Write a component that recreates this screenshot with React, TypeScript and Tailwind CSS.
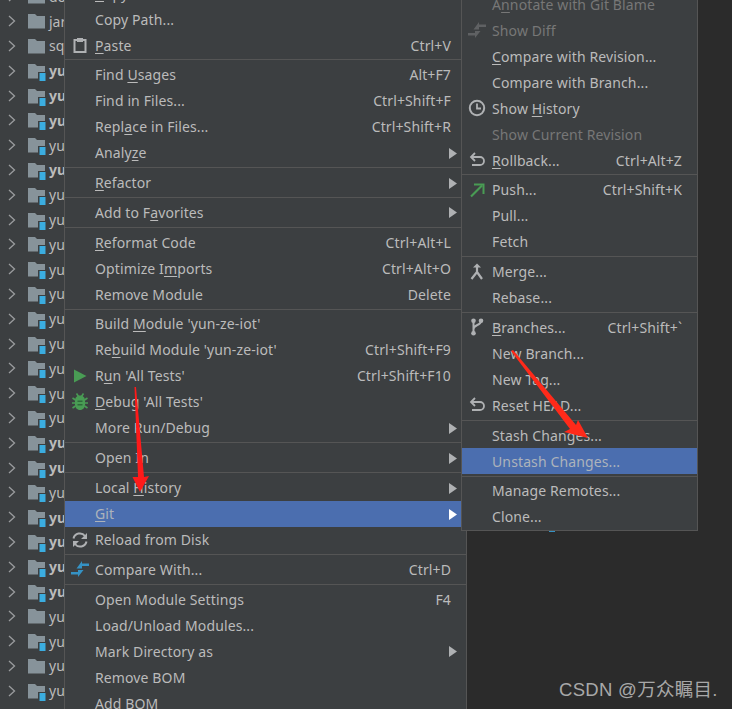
import type { ReactNode } from 'react';

type Row = {
  label?: string;
  u?: number;
  keys?: string;
  sub?: boolean;
  off?: boolean;
  active?: boolean;
  icon?: ReactNode;
};

const PasteIcon = (
  <svg width="16" height="16" viewBox="0 0 16 16" fill="none">
    <path d="M2.5 3h11v12h-11z" stroke="#afb1b3" strokeWidth="2" />
    <path d="M5 1h6v4H5z" fill="#afb1b3" />
  </svg>
);
const PlayIcon = (
  <svg width="16" height="16" viewBox="0 0 16 16">
    <path d="M2 1.500 14.500 8 2 14.500z" fill="#499c54" />
  </svg>
);
const BugIcon = (
  <svg width="18" height="18" viewBox="0 0 18 18" fill="none">
    <path d="M5.500 .500l2 3M12.500 .500l-2 3M1 10h3M14 10h3M1.500 5 4.500 7M16.500 5 13.500 7M1.500 15 4.500 13M16.500 15 13.500 13" stroke="#499c54" strokeWidth="1.600" />
    <path d="M9 2.500c3 0 5 2 5 5v4c0 3-2 5.500-5 5.500s-5-2.500-5-5.500v-4c0-3 2-5 5-5z" fill="#499c54" />
    <path d="M6.500 7.500h5v1.500h-5zM6.500 11h5v1.500h-5z" fill="#2f6b3a" />
  </svg>
);
const ReloadIcon = (
  <svg width="16" height="16" viewBox="0 0 16 16" fill="none">
    <path d="M1.500 6.500A6.500 6.500 0 0 1 13 4M14.500 9.500A6.500 6.500 0 0 1 3 12" stroke="#afb1b3" strokeWidth="2" />
    <path d="M15 1v6H9zM1 15V9h6z" fill="#afb1b3" />
  </svg>
);
const CompareIcon = ({ color }: { color: string }) => (
  <svg width="18" height="18" viewBox="0 0 18 18">
    <path d="M11 1v7.500H5.500zM11 3.500h7V6h-7z" fill={color} />
    <path d="M7 17v-7h5.500zM0 12h7v2.500H0z" fill={color} />
  </svg>
);
const ClockIcon = (
  <svg width="18" height="18" viewBox="0 0 18 18" fill="none">
    <circle cx="9" cy="9" r="7.200" stroke="#afb1b3" strokeWidth="2" />
    <path d="M9 4.500V9.500H13" stroke="#afb1b3" strokeWidth="1.800" />
  </svg>
);
const UndoIcon = (
  <svg width="16" height="16" viewBox="0 0 16 16" fill="none">
    <path d="M2 5h9a3.500 3.500 0 0 1 0 8H3" stroke="#afb1b3" strokeWidth="1.800" />
    <path d="M6 1 2 5l4 4" stroke="#afb1b3" strokeWidth="1.800" />
  </svg>
);
const PushIcon = (
  <svg width="16" height="16" viewBox="0 0 16 16" fill="none">
    <path d="M2 14.500 13 3.500" stroke="#499c54" strokeWidth="2.200" />
    <path d="M5 2.500h9.500V12" stroke="#499c54" strokeWidth="2" />
  </svg>
);
const MergeIcon = (
  <svg width="16" height="18" viewBox="0 0 16 18" fill="none">
    <path d="M8 3v6M8 9l-5.500 7M8 9l5 7" stroke="#afb1b3" strokeWidth="2.200" />
    <path d="M4 4.500 8 .500l4 4z" fill="#afb1b3" />
  </svg>
);
const BranchIcon = (
  <svg width="14" height="18" viewBox="0 0 14 18" fill="none">
    <path d="M3.500 3v12M11 3c0 5-7 3-7.500 8" stroke="#afb1b3" strokeWidth="2" />
    <circle cx="3.500" cy="2.800" r="2.300" fill="#afb1b3" />
    <circle cx="3.500" cy="15.200" r="2.300" fill="#afb1b3" />
    <circle cx="11" cy="2.800" r="2.300" fill="#afb1b3" />
  </svg>
);

const mainRows: Row[] = [
  { label: 'Copy', u: 0, keys: 'Ctrl+C' },
  { label: 'Copy Path...' },
  { label: 'Paste', u: 0, keys: 'Ctrl+V', icon: PasteIcon },
  {},
  { label: 'Find Usages', u: 5, keys: 'Alt+F7' },
  { label: 'Find in Files...', keys: 'Ctrl+Shift+F' },
  { label: 'Replace in Files...', u: 4, keys: 'Ctrl+Shift+R' },
  { label: 'Analyze', u: 5, sub: true },
  {},
  { label: 'Refactor', u: 0, sub: true },
  {},
  { label: 'Add to Favorites', u: 8, sub: true },
  {},
  { label: 'Reformat Code', u: 0, keys: 'Ctrl+Alt+L' },
  { label: 'Optimize Imports', u: 10, keys: 'Ctrl+Alt+O' },
  { label: 'Remove Module', keys: 'Delete' },
  {},
  { label: "Build Module 'yun-ze-iot'", u: 6 },
  { label: "Rebuild Module 'yun-ze-iot'", u: 2, keys: 'Ctrl+Shift+F9' },
  { label: "Run 'All Tests'", u: 1, keys: 'Ctrl+Shift+F10', icon: PlayIcon },
  { label: "Debug 'All Tests'", u: 0, icon: BugIcon },
  { label: 'More Run/Debug', sub: true },
  {},
  { label: 'Open In', sub: true },
  {},
  { label: 'Local History', u: 6, sub: true },
  { label: 'Git', u: 0, sub: true, active: true },
  { label: 'Reload from Disk', icon: ReloadIcon },
  {},
  { label: 'Compare With...', keys: 'Ctrl+D', icon: <CompareIcon color="#3592c4" /> },
  {},
  { label: 'Open Module Settings', keys: 'F4' },
  { label: 'Load/Unload Modules...' },
  { label: 'Mark Directory as', sub: true },
  { label: 'Remove BOM' },
  { label: 'Add BOM' },
];

const gitRows: Row[] = [
  { label: 'Annotate with Git Blame', u: 1, off: true },
  { label: 'Show Diff', off: true, icon: <CompareIcon color="#5f6163" /> },
  { label: 'Compare with Revision...', u: 0 },
  { label: 'Compare with Branch...' },
  { label: 'Show History', u: 5, icon: ClockIcon },
  { label: 'Show Current Revision', off: true },
  { label: 'Rollback...', u: 0, keys: 'Ctrl+Alt+Z', icon: UndoIcon },
  {},
  { label: 'Push...', keys: 'Ctrl+Shift+K', icon: PushIcon },
  { label: 'Pull...' },
  { label: 'Fetch' },
  {},
  { label: 'Merge...', icon: MergeIcon },
  { label: 'Rebase...' },
  {},
  { label: 'Branches...', u: 0, keys: 'Ctrl+Shift+`', icon: BranchIcon },
  { label: 'New Branch...' },
  { label: 'New Tag...' },
  { label: 'Reset HEAD...', icon: UndoIcon },
  {},
  { label: 'Stash Changes...' },
  { label: 'Unstash Changes...', active: true },
  {},
  { label: 'Manage Remotes...' },
  { label: 'Clone...' },
];

// b = bold name, m = module badge on the folder
const treeRows = [
  { n: 'do', m: false },
  { n: 'jar', m: false },
  { n: 'sql', m: false },
  { n: 'yun', b: true, m: true },
  { n: 'yun', b: true, m: true },
  { n: 'yun', b: true, m: true },
  { n: 'yun', m: true },
  { n: 'yun', b: true, m: true },
  { n: 'yun', m: true },
  { n: 'yun', m: true },
  { n: 'yun', m: true },
  { n: 'yun', m: true },
  { n: 'yun', m: true },
  { n: 'yun', m: true },
  { n: 'yun', m: true },
  { n: 'yun', m: true },
  { n: 'yun', m: true },
  { n: 'yun', m: true },
  { n: 'yun', b: true, m: true },
  { n: 'yun', b: true, m: true },
  { n: 'yun', m: true },
  { n: 'yun', b: true, m: true },
  { n: 'yun', b: true, m: true },
  { n: 'yun', b: true, m: true },
  { n: 'yun', b: true, m: true },
  { n: 'yun', m: false },
  { n: 'yun', m: true },
  { n: 'yun', m: false },
  { n: 'yun', m: true },
];

function MenuLabel({ row }: { row: Row }) {
  const text = row.label ?? '';
  if (row.u === undefined) return <span>{text}</span>;
  return (
    <span>
      {text.slice(0, row.u)}
      <span className="underline underline-offset-2">{text[row.u]}</span>
      {text.slice(row.u + 1)}
    </span>
  );
}

function MenuRows({ rows }: { rows: Row[] }) {
  return (
    <>
      {rows.map((row, i) =>
        row.label ? (
          <div
            key={i}
            className={`relative flex h-[26px] items-center justify-between pl-[30px] pr-[15px] text-[14px] tracking-[0.12px] whitespace-nowrap ${
              row.active ? 'bg-[#4b6eaf]' : ''
            } ${row.off ? 'text-[#777777]' : row.active ? 'text-[#adb3bb]' : 'text-[#bbbbbb]'}`}
          >
            {row.icon && (
              <span className="absolute left-[6px] top-0 flex h-full w-[18px] items-center justify-center">
                {row.icon}
              </span>
            )}
            <MenuLabel row={row} />
            {row.keys && <span>{row.keys}</span>}
            {row.sub && (
              <svg className="absolute right-[9px] top-[8px]" width="8" height="11" viewBox="0 0 8 11">
                <path d="M0 0 8 5.500 0 11z" fill={row.active ? '#ffffff' : '#afb1b3'} />
              </svg>
            )}
          </div>
        ) : (
          <div key={i} className="flex h-[3.8px] items-center">
            <div className="h-px w-full bg-[#555555]" />
          </div>
        ),
      )}
    </>
  );
}

export default function App() {
  return (
    <div className="relative flex h-[709px] w-[732px] overflow-hidden bg-[#2b2b2b] font-['Noto_Sans','Noto_Sans_CJK_SC',sans-serif]">
      {/* project tree */}
      <div className="-mt-[16px] min-h-[760px] w-[65px] shrink-0 overflow-hidden bg-[#3c3f41]">
        {treeRows.map((row, i) => (
          <div key={i} className="flex h-[24.8px] items-center overflow-hidden pl-[8px] text-[14px] text-[#bbbbbb]">
            <svg width="8" height="12" viewBox="0 0 8 12" fill="none" className="shrink-0">
              <path d="M1 1l5.500 5L1 11" stroke="#9a9c9e" strokeWidth="1.300" />
            </svg>
            <svg width="20" height="20" viewBox="0 0 20 20" className="ml-[11px] shrink-0">
              <path d="M1 3h7l2 2h8v12.500H1z" fill="#87939a" />
              {row.m && <path d="M11 11h9v9h-9z" fill="#3c3f41" />}
              {row.m && <path d="M12.500 12h6v8h-6z" fill="#3bade0" />}
            </svg>
            <span className={`ml-[2px] whitespace-nowrap ${row.b ? 'font-bold' : ''}`}>{row.n}</span>
          </div>
        ))}
      </div>

      {/* main context menu */}
      <div className="absolute -top-[20px] left-[64px] w-[403px] border-x border-[#555555] bg-[#3c3f41]">
        <MenuRows rows={mainRows} />
      </div>

      {/* stray bit of the editor showing below the git submenu */}
      <div className="absolute left-[549px] top-[530px] h-[2px] w-[6px] bg-[#3592c4]" />

      {/* git submenu */}
      <div className="absolute -top-[10px] left-[461px] w-[237px] border border-[#555555] bg-[#3c3f41]">
        <MenuRows rows={gitRows} />
      </div>

      {/* red annotation arrows */}
      <svg className="absolute left-0 top-0" width="732" height="709">
        <polygon points="134.500,387 136,387 144,477 149,476 140,492 132.500,477 138,477" fill="#ff1a1a" />
        <polygon points="511,351 513,350 576,425 578,420 588,438 564,432 570,429" fill="#ff2a1a" />
      </svg>

      <div className="absolute left-[559px] top-[676px] whitespace-nowrap font-['Liberation_Sans','Noto_Sans_CJK_SC',sans-serif] text-[18.500px] tracking-[0.300px] text-[#a8a8a8]">
        CSDN @万众瞩目.
      </div>
    </div>
  );
}
